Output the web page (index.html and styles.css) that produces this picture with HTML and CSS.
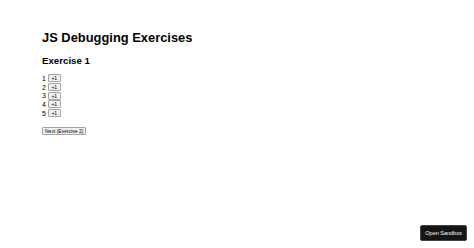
FILE: index.html
```html
<!DOCTYPE html>
<html>
<head>
<meta charset="utf-8">
<link rel="stylesheet" href="styles.css">
</head>
<body>
<main class="app">
  <h1 class="title">JS Debugging Exercises</h1>
  <h2 class="subtitle">Exercise 1</h2>
  <ul class="counters">
    <li class="counter"><span class="num">1</span><button class="btn">+1</button></li>
    <li class="counter"><span class="num">2</span><button class="btn">+1</button></li>
    <li class="counter"><span class="num">3</span><button class="btn">+1</button></li>
    <li class="counter"><span class="num">4</span><button class="btn">+1</button></li>
    <li class="counter"><span class="num">5</span><button class="btn">+1</button></li>
  </ul>
  <button class="btn next">Next (Exercise 2)</button>
</main>
<button class="sandbox">Open Sandbox</button>
</body>
</html>
```
FILE: styles.css
```css
html, body {
  margin: 0;
  padding: 0;
  background: #fff;
}
body {
  font-family: "Liberation Sans", Arial, sans-serif;
  font-size: 7px;
  color: #000;
}
.app {
  padding: 30px 0 0 42px;
}
.title {
  font-size: 12.9px;
  font-weight: bold;
  margin: 0 0 9px 0;
  line-height: 16px;
}
.subtitle {
  font-size: 9.7px;
  font-weight: bold;
  margin: 0 0 7px 0;
  line-height: 12px;
}
.counters {
  list-style: none;
  margin: 0 0 10px 0;
  padding: 0;
}
.counter {
  display: flex;
  align-items: center;
  gap: 2px;
  height: 8.7px;
}
.btn {
  font-family: "Liberation Sans", Arial, sans-serif;
  font-size: 5px;
  line-height: 6px;
  height: 8px;
  padding: 0 2.5px;
  margin: 0;
  border: 1px solid #a5a5a5;
  border-radius: 1px;
  background: #f0f0f0;
  color: #000;
}
.next {
  padding: 0 2px;
}
.sandbox {
  position: fixed;
  right: 7px;
  bottom: 7px;
  background: #151515;
  color: #fff;
  border: 1px solid #444;
  border-radius: 2px;
  font-family: "Liberation Sans", Arial, sans-serif;
  font-size: 5.5px;
  padding: 4px 4px;
  line-height: 6px;
}
```
